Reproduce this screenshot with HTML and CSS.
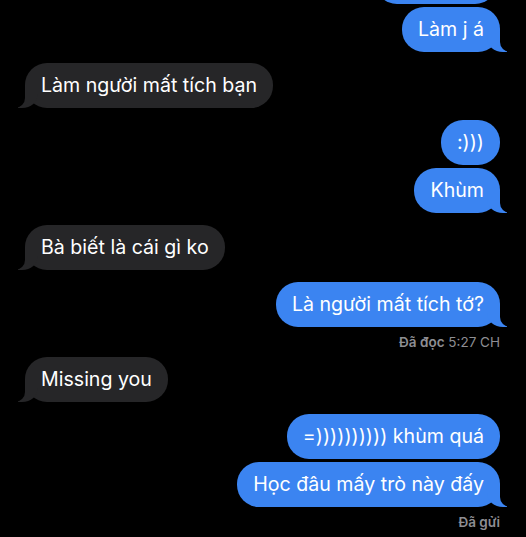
FILE: index.html
```html
<!DOCTYPE html>
<html lang="vi">
<head>
<meta charset="utf-8">
<link rel="stylesheet" href="styles.css">
</head>
<body>
<div class="thread">
  <div class="row sent"><div class="bubble partial"></div></div>
  <div class="row sent tight"><div class="bubble tail">Làm j á</div></div>
  <div class="row recv gap11"><div class="bubble tail">Làm người mất tích bạn</div></div>
  <div class="row sent"><div class="bubble">:)))</div></div>
  <div class="row sent tight"><div class="bubble tail">Khùm</div></div>
  <div class="row recv"><div class="bubble tail">Bà biết là cái gì ko</div></div>
  <div class="row sent"><div class="bubble tail">Là người mất tích tớ?</div></div>
  <div class="status"><b>Đã đọc</b> 5:27 CH</div>
  <div class="row recv after-status"><div class="bubble tail">Missing you</div></div>
  <div class="row sent"><div class="bubble">=)))))))))) khùm quá</div></div>
  <div class="row sent tight"><div class="bubble tail">Học đâu mấy trò này đấy</div></div>
  <div class="status"><b>Đã gửi</b></div>
</div>
</body>
</html>
```
FILE: styles.css
```css
html, body {
  margin: 0;
  padding: 0;
  background: #000;
  overflow: hidden;
}
body {
  font-family: Inter, "Noto Sans", "Liberation Sans", sans-serif;
  color: #fff;
}
.thread {
  display: flex;
  flex-direction: column;
  padding: 0 26px 0 25px;
  margin-top: -41px;
}
.row {
  display: flex;
  margin-top: 12px;
}
.row:first-child { margin-top: 0; }
.row.tight { margin-top: 3px; }
.row.gap11 { margin-top: 11px; }
.row.after-status { margin-top: 6px; }
.sent { justify-content: flex-end; }
.recv { justify-content: flex-start; }
.bubble {
  position: relative;
  font-size: 19.6px;
  line-height: 25px;
  padding: 10px 16px;
  border-radius: 22px;
  white-space: nowrap;
}
.bubble.partial {
  width: 90px;
  height: 25px;
  margin-right: 3px;
}
.sent .bubble { background: #3b84f1; }
.recv .bubble { background: #262628; }
.sent .bubble.tail::before {
  content: "";
  position: absolute;
  right: -7px;
  bottom: 0;
  width: 20px;
  height: 22px;
  background: #3b84f1;
  border-bottom-left-radius: 16px 14px;
}
.sent .bubble.tail::after {
  content: "";
  position: absolute;
  right: -26px;
  bottom: 0;
  width: 26px;
  height: 24px;
  background: #000;
  border-bottom-left-radius: 10px;
}
.recv .bubble.tail::before {
  content: "";
  position: absolute;
  left: -7px;
  bottom: 0;
  width: 20px;
  height: 22px;
  background: #262628;
  border-bottom-right-radius: 16px 14px;
}
.recv .bubble.tail::after {
  content: "";
  position: absolute;
  left: -26px;
  bottom: 0;
  width: 26px;
  height: 24px;
  background: #000;
  border-bottom-right-radius: 10px;
}
.status {
  align-self: flex-end;
  margin-top: 7px;
  font-size: 13.5px;
  line-height: 17px;
  color: #8e8e93;
}
.status b { font-weight: 600; }
```
